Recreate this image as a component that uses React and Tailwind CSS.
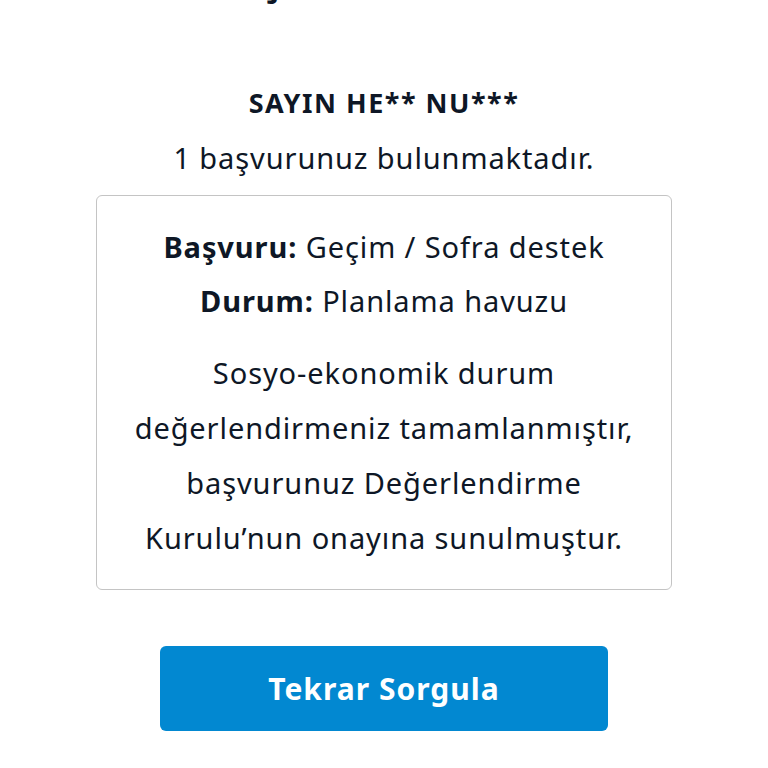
export default function App() {
  return (
    <div
      className="min-h-[768px] bg-white flex flex-col items-center text-[#0e1726] overflow-hidden"
      style={{ fontFamily: '"Noto Sans", "DejaVu Sans", sans-serif' }}
    >
      <h1 className="mt-[-47px] text-[42px] font-bold leading-[50px] tracking-[1.5px]">Başvuru Sonucu</h1>

      <h2 className="mt-[85px] text-[27px] font-bold leading-[30px] tracking-[1.5px]">SAYIN HE** NU***</h2>
      <p className="mt-[24px] text-[29px] leading-[32px] tracking-[0.9px]">1 başvurunuz bulunmaktadır.</p>

      <div className="mt-[21px] w-[576px] rounded-md border border-[#c4c4c4] px-5 py-6 text-center text-[29px] leading-[54px] tracking-[0.9px]">
        <p>
          <span className="font-bold">Başvuru:</span> Geçim / Sofra destek
        </p>
        <p>
          <span className="font-bold">Durum:</span> Planlama havuzu
        </p>
        <p className="mt-[17px] leading-[55px]">
          Sosyo-ekonomik durum değerlendirmeniz tamamlanmıştır, başvurunuz Değerlendirme Kurulu’nun onayına sunulmuştur.
        </p>
      </div>

      <button className="mt-[56px] w-[448px] h-[85px] rounded-md bg-[#0288d1] text-white text-[30px] font-bold tracking-[1px]">
        Tekrar Sorgula
      </button>
    </div>
  )
}
